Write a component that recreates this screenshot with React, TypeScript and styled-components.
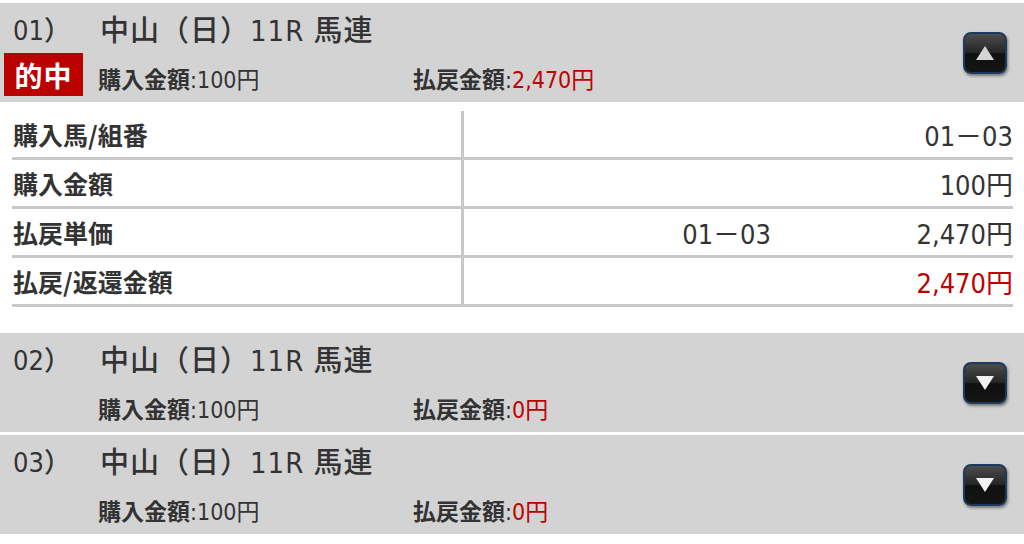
import styled, { createGlobalStyle } from 'styled-components';

const GlobalStyle = createGlobalStyle`
  html, body {
    margin: 0;
    padding: 0;
    background: #ffffff;
  }
  body {
    font-family: "DejaVu Sans Condensed", "Noto Sans CJK JP", sans-serif;
    color: #333333;
  }
`;

const Page = styled.div`
  width: 1024px;
  height: 544px;
  overflow: hidden;
  background: #ffffff;
  padding-top: 3px;
  display: flex;
  flex-direction: column;
  gap: 3px;
  box-sizing: border-box;
`;

const Header = styled.div`
  height: 99px;
  flex-shrink: 0;
  background: #d3d3d3;
  display: flex;
  align-items: center;
  padding: 0 17px 0 4px;
  box-sizing: border-box;
`;

const Info = styled.div`
  flex: 1;
  align-self: stretch;
  display: flex;
  flex-direction: column;
`;

const TitleRow = styled.div`
  height: 50px;
  display: flex;
  align-items: center;
  font-size: 29px;
  font-weight: 500;
  letter-spacing: 1px;
`;

const Num = styled.span`
  width: 96px;
  padding-left: 9px;
  box-sizing: border-box;
  font-size: 27px;
  letter-spacing: 0;
`;

const SubRow = styled.div`
  height: 43px;
  display: flex;
  align-items: center;
  font-size: 23px;
`;

const BadgeSlot = styled.div`
  width: 94px;
  flex-shrink: 0;
  display: flex;
`;

const Badge = styled.span`
  display: inline-flex;
  align-items: center;
  justify-content: center;
  width: 79px;
  height: 43px;
  background: #bb0000;
  color: #ffffff;
  font-family: "Noto Sans CJK JP", sans-serif;
  font-weight: 700;
  font-size: 28px;
  letter-spacing: 1px;
`;

const Amount = styled.span<{ $width?: number }>`
  width: ${({ $width }) => ($width ? `${$width}px` : 'auto')};
  flex-shrink: 0;
  padding-top: 7px;
`;

const Key = styled.span`
  font-family: "Noto Sans CJK JP", sans-serif;
  font-weight: 700;
`;

const Value = styled.span<{ $red?: boolean }>`
  color: ${({ $red }) => ($red ? '#c00000' : 'inherit')};
`;

const ToggleButton = styled.button`
  width: 44px;
  height: 42px;
  padding: 0;
  border: 2px solid #1c3a5e;
  border-radius: 8px;
  background: linear-gradient(#4c4c4c 0%, #262626 48%, #101010 52%, #151515 100%);
  box-shadow: 1px 2px 3px rgba(0, 0, 0, 0.45);
  display: flex;
  align-items: center;
  justify-content: center;
  box-sizing: border-box;
`;

const Body = styled.div`
  padding: 9px 11px 23px 12px;
  background: #ffffff;
  flex-shrink: 0;
`;

const Row = styled.div`
  display: grid;
  grid-template-columns: 449px 3px 1fr 242px;
  height: 46px;
  border-bottom: 3px solid #c8c8c8;
  align-items: center;
`;

const Label = styled.div`
  font-family: "Noto Sans CJK JP", sans-serif;
  font-weight: 700;
  font-size: 25px;
  padding-left: 1px;
`;

const Divider = styled.div`
  align-self: stretch;
  background: #c8c8c8;
`;

const Mid = styled.div`
  text-align: right;
  font-size: 27px;
`;

const Cell = styled.div<{ $red?: boolean }>`
  text-align: right;
  font-size: 27px;
  color: ${({ $red }) => ($red ? '#c00000' : 'inherit')};
`;

const Arrow = ({ up }: { up: boolean }) => (
  <svg width="20" height="16" viewBox="0 0 20 16">
    {up ? (
      <polygon points="10,1 19,15 1,15" fill="#d4d4d4" />
    ) : (
      <polygon points="1,1 19,1 10,15" fill="#f2f2f2" />
    )}
  </svg>
);

type Bet = {
  no: string;
  hit: boolean;
  pay: string;
  open: boolean;
};

const bets: Bet[] = [
  { no: '01）', hit: true, pay: '2,470円', open: true },
  { no: '02）', hit: false, pay: '0円', open: false },
  { no: '03）', hit: false, pay: '0円', open: false },
];

const details = [
  { label: '購入馬/組番', mid: '', value: '01－03', red: false },
  { label: '購入金額', mid: '', value: '100円', red: false },
  { label: '払戻単価', mid: '01－03', value: '2,470円', red: false },
  { label: '払戻/返還金額', mid: '', value: '2,470円', red: true },
];

const App = () => (
  <>
    <GlobalStyle />
    <Page>
      {bets.map((b) => (
        <div key={b.no}>
          <Header>
            <Info>
              <TitleRow>
                <Num>{b.no}</Num>
                <span>中山（日）11R 馬連</span>
              </TitleRow>
              <SubRow>
                <BadgeSlot>{b.hit && <Badge>的中</Badge>}</BadgeSlot>
                <Amount $width={315}>
                  <Key>購入金額</Key>:100円
                </Amount>
                <Amount>
                  <Key>払戻金額</Key>:<Value $red>{b.pay}</Value>
                </Amount>
              </SubRow>
            </Info>
            <ToggleButton>
              <Arrow up={b.open} />
            </ToggleButton>
          </Header>
          {b.open && (
            <Body>
              {details.map((d) => (
                <Row key={d.label}>
                  <Label>{d.label}</Label>
                  <Divider />
                  <Mid>{d.mid}</Mid>
                  <Cell $red={d.red}>{d.value}</Cell>
                </Row>
              ))}
            </Body>
          )}
        </div>
      ))}
    </Page>
  </>
);

export default App;
